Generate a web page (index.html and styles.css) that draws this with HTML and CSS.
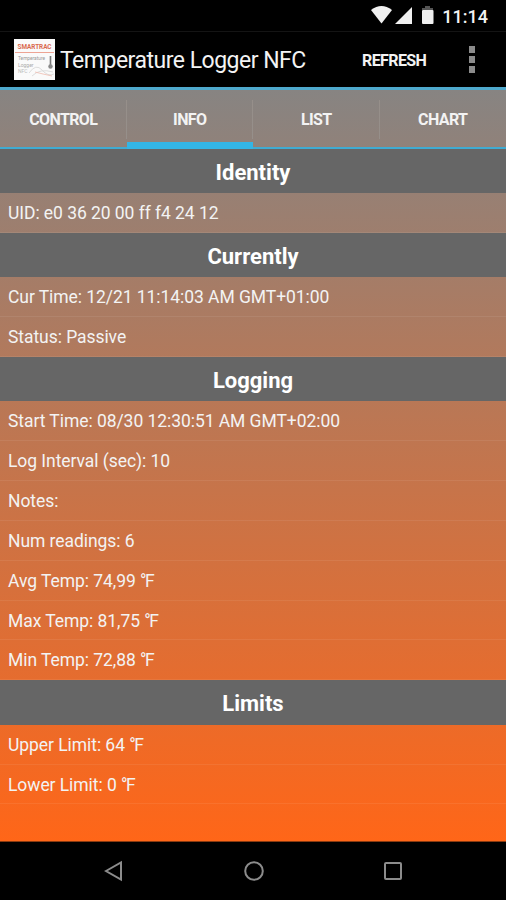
FILE: index.html
```html
<!DOCTYPE html>
<html>
    <head>
        <meta charset="utf-8">
        <title>Temperature Logger NFC</title>
        <link rel="stylesheet" href="styles.css">
    </head>
    <body>
        <div class="statusbar">
            <svg width="64" height="22" viewBox="0 0 64 22">
                <path d="M1 5 Q11.5 -3 22 5 L11.5 18.5 Z" fill="#f0f0f0"/>
                <path d="M25 19 L42 2 V19 Z" fill="#f0f0f0"/>
                <path d="M52 5 V3 H55 V1 H60 V3 H63 V5 Z" fill="#555"/>
                <rect x="52" y="5" width="11.5" height="14" rx="1" fill="#f0f0f0"/>
            </svg>
            <span class="clock">11:14</span>
        </div>
        <div class="actionbar">
            <svg class="logo" width="41" height="41" viewBox="0 0 41 41">
                <rect width="41" height="41" fill="#fafafa"/>
                <text x="3.5" y="9.8" font-size="6.8" textLength="34" lengthAdjust="spacingAndGlyphs" fill="#d9694f" class="brand">SMARTRAC</text>
                <path d="M1 13.5 H40" stroke="#eda494" stroke-width="1"/>
                <text x="4" y="21" font-size="5.5" textLength="27" lengthAdjust="spacingAndGlyphs" fill="#999">Temperature</text>
                <text x="4" y="28" font-size="5" fill="#aaa">Logger</text>
                <text x="4" y="34" font-size="5" fill="#bbb">NFC</text>
                <path d="M36.5 17 V28" stroke="#777" stroke-width="1.6"/>
                <circle cx="36.5" cy="27.5" r="2.2" fill="#888"/>
                <path d="M15 34 Q22 24 28 31 T40 35 M18 37 Q26 29 39 33" stroke="#ddd" stroke-width="1" fill="none"/>
                <path d="M21 33 L29 35 L38 37" stroke="#efbcb0" stroke-width=".8" fill="none"/>
            </svg>
            <span class="title">Temperature Logger NFC</span>
            <span class="refresh">REFRESH</span>
            <div class="overflow"><i></i><i></i><i></i></div>
        </div>
        <div class="content">
            <div class="tabs">
                <div class="tab">CONTROL</div>
                <div class="tab active">INFO</div>
                <div class="tab">LIST</div>
                <div class="tab">CHART</div>
            </div>
            <div class="header">Identity</div>
            <div class="row">UID: e0 36 20 00 ff f4 24 12</div>
            <div class="header">Currently</div>
            <div class="row">Cur Time: 12/21 11:14:03 AM GMT+01:00</div>
            <div class="row">Status: Passive</div>
            <div class="header">Logging</div>
            <div class="row">Start Time: 08/30 12:30:51 AM GMT+02:00</div>
            <div class="row">Log Interval (sec): 10</div>
            <div class="row">Notes:</div>
            <div class="row">Num readings: 6</div>
            <div class="row">Avg Temp: 74,99 <span class="deg">°</span>F</div>
            <div class="row">Max Temp: 81,75 <span class="deg">°</span>F</div>
            <div class="row">Min Temp: 72,88 <span class="deg">°</span>F</div>
            <div class="header">Limits</div>
            <div class="row">Upper Limit: 64 <span class="deg">°</span>F</div>
            <div class="row">Lower Limit: 0 <span class="deg">°</span>F</div>
        </div>
        <div class="navbar">
            <svg width="20" height="22" viewBox="0 0 20 22">
                <path d="M2 11 L17 2.5 V19.5 Z" fill="none" stroke="#8c8c8c" stroke-width="2"/>
            </svg>
            <svg width="22" height="22" viewBox="0 0 22 22">
                <circle cx="11" cy="11" r="8.8" fill="none" stroke="#8c8c8c" stroke-width="2"/>
            </svg>
            <svg width="20" height="22" viewBox="0 0 20 22">
                <rect x="2" y="3" width="16" height="16" rx="1" fill="none" stroke="#8c8c8c" stroke-width="2"/>
            </svg>
        </div>
    </body>
</html>
```

FILE: styles.css
```css
* {
    box-sizing: border-box;
}
body {
    margin: 0;
    width: 506px;
    height: 900px;
    overflow: hidden;
    background-color: black;
    color: #f3f3f3;
    font-family: Roboto, "Liberation Sans", sans-serif;
}
.statusbar {
    display: flex;
    justify-content: flex-end;
    height: 32px;
    padding: 5px 18px 0 0;
    border-bottom: 1px solid #141414;
}
.clock {
    margin-left: 8px;
    font-size: 18px;
    font-weight: 500;
    line-height: 23px;
}
.actionbar {
    display: flex;
    align-items: center;
    height: 55px;
    padding-left: 14px;
}
.logo {
    overflow: visible;
}
.brand {
    font-weight: bold;
}
.title {
    width: 307px;
    padding: 2px 0 0 5px;
    font-size: 23px;
    letter-spacing: -0.5px;
    white-space: nowrap;
}
.refresh {
    width: 107px;
    padding-top: 1px;
    font-size: 16px;
    letter-spacing: -0.6px;
    font-weight: bold;
}
.overflow {
    display: flex;
    flex-direction: column;
    gap: 3px;
}
.overflow i {
    width: 6px;
    height: 7px;
    background-color: #8b8b8b;
}
.content {
    height: 755px;
    border-top: 3px solid #4fa9cd;
    border-bottom: 1px solid #8a3a10;
    background: linear-gradient(#878482, #ff6618);
}
.tabs {
    display: flex;
    height: 58.5px;
    border-bottom: 2px solid #3fabd2;
}
.tab {
    display: flex;
    width: 126.75px;
    align-items: center;
    justify-content: center;
    height: 58.5px;
    font-size: 16px;
    letter-spacing: -0.6px;
    font-weight: bold;
    border-bottom: 0 solid #33b5e5;
    background: linear-gradient(#968f8a, #968f8a) right 10px / 1px 39px no-repeat;
}
.tab:last-child {
    background: none;
}
.active {
    padding-top: 7px;
    border-bottom-width: 7px;
}
.header {
    height: 44.4px;
    line-height: 47px;
    background-color: #666;
    color: white;
    font-size: 22px;
    font-weight: bold;
    text-align: center;
}
.row {
    height: 39.86px;
    padding-left: 8px;
    line-height: 41px;
    font-size: 17.5px;
    letter-spacing: -0.06px;
    white-space: nowrap;
    border-bottom: 1px solid rgba(255, 255, 255, 0.07);
}
.deg {
    letter-spacing: -1.5px;
}
.navbar {
    display: flex;
    justify-content: space-between;
    height: 58px;
    padding: 18px 103px 0 104px;
}
```
